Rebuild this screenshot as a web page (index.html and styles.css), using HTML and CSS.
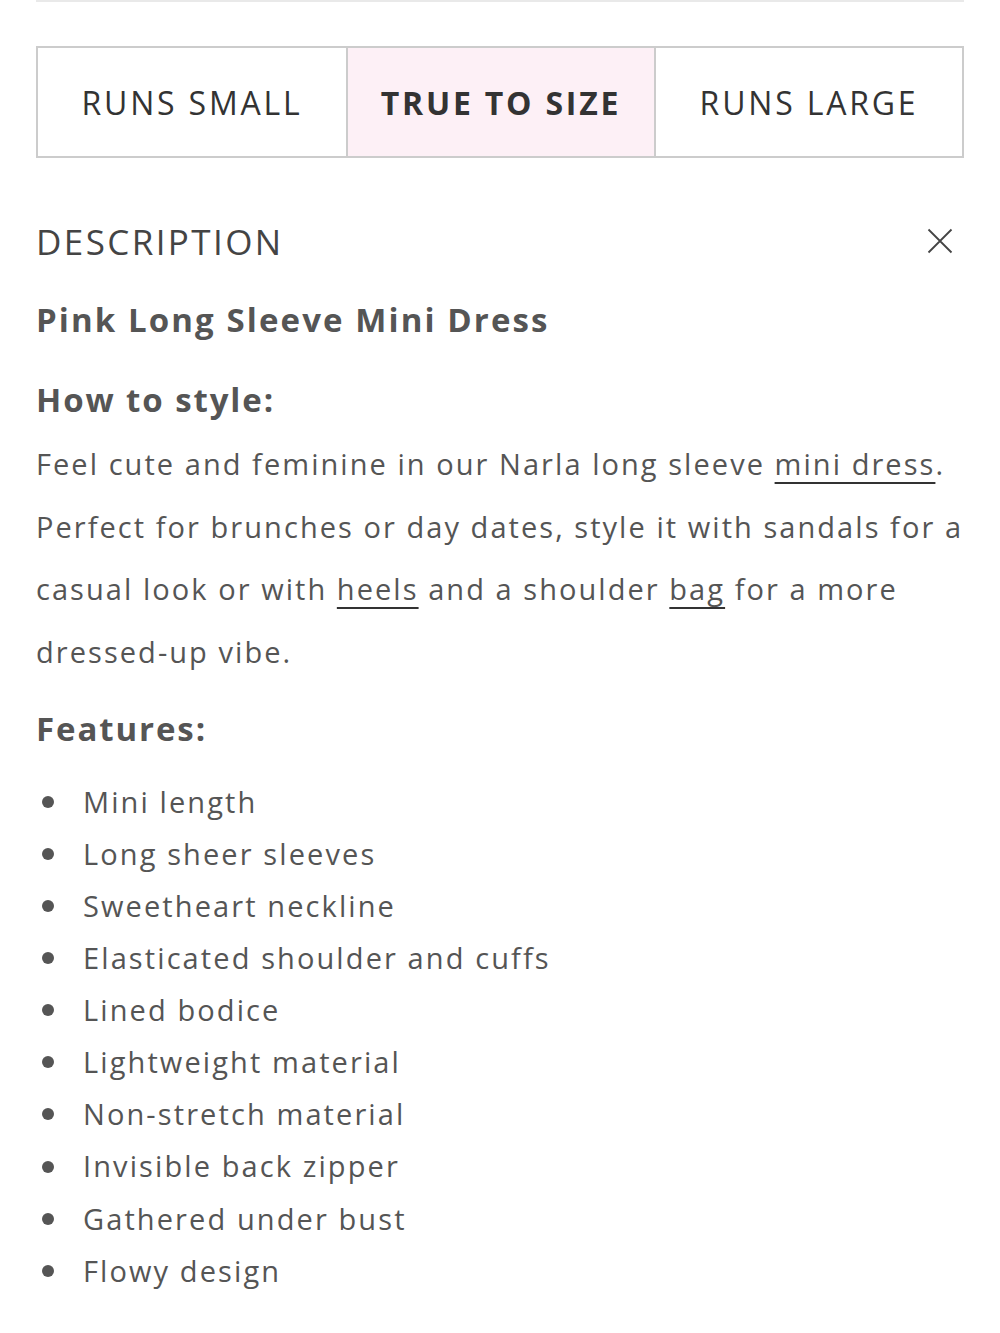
FILE: index.html
```html
<!DOCTYPE html>
<html lang="en">
<head>
    <meta charset="UTF-8">
    <meta name="viewport" content="width=device-width, initial-scale=1.0">
    <title>Narla Pink Long Sleeve Mini Dress</title>
    <link rel="stylesheet" href="styles.css">
</head>
<body>

    <div class="product-info">
        <div class="fit-options">
            <button type="button" class="fit-option">RUNS SMALL</button>
            <button type="button" class="fit-option active">TRUE TO SIZE</button>
            <button type="button" class="fit-option">RUNS LARGE</button>
        </div>

        <div class="accordion-head">
            <span class="accordion-title">DESCRIPTION</span>
            <button type="button" class="close-btn" aria-label="Close">
                <svg width="26" height="26" viewBox="0 0 26 26">
                    <path d="M1.5 1.5 L24.5 24.5 M24.5 1.5 L1.5 24.5" stroke="#444" stroke-width="1.8" fill="none"/>
                </svg>
            </button>
        </div>

        <div class="description">
            <h2>Pink Long Sleeve Mini Dress</h2>

            <h3>How to style:</h3>
            <p>Feel cute and feminine in our Narla long sleeve <a href="#">mini dress</a>. Perfect for brunches or day dates, style it with sandals for a casual look or with <a href="#">heels</a> and a shoulder <a href="#">bag</a> for a more <span class="nowrap">dressed-up</span> vibe.</p>

            <h3 class="features-title">Features:</h3>
            <ul class="features">
                <li>Mini length</li>
                <li>Long sheer sleeves</li>
                <li>Sweetheart neckline</li>
                <li>Elasticated shoulder and cuffs</li>
                <li>Lined bodice</li>
                <li>Lightweight material</li>
                <li>Non-stretch material</li>
                <li>Invisible back zipper</li>
                <li>Gathered under bust</li>
                <li>Flowy design</li>
            </ul>
        </div>
    </div>

</body>
</html>
```

FILE: styles.css
```css
body {
    font-family: "Open Sans", Lato, sans-serif;
    margin: 0;
    padding: 0;
    background-color: white;
    color: #555;
}

.product-info {
    margin: 0 36px;
    border-top: 2px solid #e9e9e9;
    padding-top: 1px;
}

/* size fit selector */
.fit-options {
    display: grid;
    grid-template-columns: repeat(3, 1fr);
    margin-top: 43px;
    border: 2px solid #ccc;
}

.fit-option {
    height: 108px;
    border: none;
    border-left: 2px solid #ccc;
    background-color: white;
    font-family: inherit;
    font-size: 32px;
    letter-spacing: 2.8px;
    color: #333;
    padding: 0;
}

.fit-option:first-child {
    border-left: none;
}

.fit-option.active {
    background-color: #fdf0f6;
    font-weight: bold;
}

/* description accordion */
.accordion-head {
    display: flex;
    justify-content: space-between;
    align-items: center;
    height: 50px;
    margin-top: 58px;
}

.accordion-title {
    font-size: 35px;
    letter-spacing: 2.4px;
    color: #444;
}

.close-btn {
    background: none;
    border: none;
    padding: 0;
    margin-right: 11px;
    display: flex;
}

.description h2,
.description h3 {
    margin: 0;
    font-size: 33px;
    line-height: 50px;
    letter-spacing: 1.9px;
    color: #555;
}

.description h2 {
    margin-top: 29px;
    letter-spacing: 2.1px;
}

.description h3 {
    margin-top: 30px;
}

.description p {
    margin: 8px 0 0;
    font-size: 29px;
    line-height: 62.7px;
    letter-spacing: 2.05px;
}

.description a {
    color: #555;
    text-decoration: underline;
    text-decoration-color: #333;
    text-decoration-thickness: 2px;
    text-underline-offset: 7px;
}

.nowrap {
    white-space: nowrap;
}

.description h3.features-title {
    margin-top: 20px;
}

.features {
    list-style: none;
    margin: 22px 0 0;
    padding-left: 6px;
    font-size: 29px;
    line-height: 52.1px;
    letter-spacing: 2.1px;
}

.features li {
    display: flex;
    align-items: center;
}

.features li::before {
    content: "";
    width: 12px;
    height: 12px;
    border-radius: 50%;
    background-color: #555;
    margin-right: 29px;
    flex-shrink: 0;
}
```
